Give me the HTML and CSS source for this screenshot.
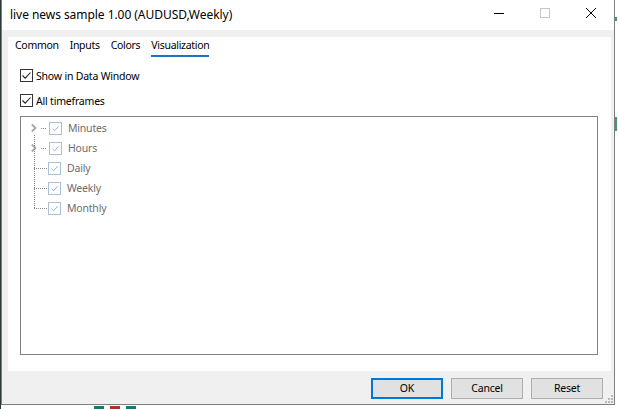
FILE: index.html
```html
<!DOCTYPE html>
<html>
<head>
<meta charset="utf-8">
<link rel="stylesheet" href="styles.css">
</head>
<body>
<div class="desk">
  <div class="win">
    <div class="titlebar">
      <span class="title">live news sample 1.00 (AUDUSD,Weekly)</span>
      <div class="ctrls">
        <span class="ctl">
          <svg width="12" height="12" viewBox="0 0 12 12"><path d="M1 6.5H11" stroke="#000" stroke-width="1"/></svg>
        </span>
        <span class="ctl">
          <svg width="12" height="12" viewBox="0 0 12 12"><rect x="1.5" y="1.5" width="9" height="9" fill="none" stroke="#c6c6c6" stroke-width="1"/></svg>
        </span>
        <span class="ctl">
          <svg width="12" height="12" viewBox="0 0 12 12"><path d="M1 1L11 11M11 1L1 11" stroke="#000" stroke-width="1"/></svg>
        </span>
      </div>
    </div>
    <div class="body">
      <div class="panel">
        <div class="tabs">
          <span class="tab">Common</span>
          <span class="tab">Inputs</span>
          <span class="tab">Colors</span>
          <span class="tab active">Visualization</span>
        </div>
        <div class="page">
          <label class="chk"><span class="box"><svg width="13" height="13" viewBox="0 0 13 13"><path d="M2.5 6.5L5.2 9.2L10.5 3.5" fill="none" stroke="#222" stroke-width="1.1"/></svg></span>Show in Data Window</label>
          <label class="chk"><span class="box"><svg width="13" height="13" viewBox="0 0 13 13"><path d="M2.5 6.5L5.2 9.2L10.5 3.5" fill="none" stroke="#222" stroke-width="1.1"/></svg></span>All timeframes</label>
          <div class="tree">
            <div class="vline"></div>
            <div class="node">
              <span class="exp"><svg width="8" height="10" viewBox="0 0 8 10"><path d="M1.8 1.5L5.5 5L1.8 8.5" fill="none" stroke="#a8a8a8" stroke-width="1.8"/></svg></span>
              <span class="dots short"></span>
              <span class="tbox"><svg width="13" height="13" viewBox="0 0 13 13"><path d="M3.5 6.8L5.6 8.8L9.5 4.3" fill="none" stroke="#8fb4d6" stroke-width="1"/></svg></span>
              <span class="lbl">Minutes</span>
            </div>
            <div class="node">
              <span class="exp"><svg width="8" height="10" viewBox="0 0 8 10"><path d="M1.8 1.5L5.5 5L1.8 8.5" fill="none" stroke="#a8a8a8" stroke-width="1.8"/></svg></span>
              <span class="dots short"></span>
              <span class="tbox"><svg width="13" height="13" viewBox="0 0 13 13"><path d="M3.5 6.8L5.6 8.8L9.5 4.3" fill="none" stroke="#8fb4d6" stroke-width="1"/></svg></span>
              <span class="lbl">Hours</span>
            </div>
            <div class="node">
              <span class="exp"></span>
              <span class="dots long"></span>
              <span class="tbox"><svg width="13" height="13" viewBox="0 0 13 13"><path d="M3.5 6.8L5.6 8.8L9.5 4.3" fill="none" stroke="#8fb4d6" stroke-width="1"/></svg></span>
              <span class="lbl">Daily</span>
            </div>
            <div class="node">
              <span class="exp"></span>
              <span class="dots long"></span>
              <span class="tbox"><svg width="13" height="13" viewBox="0 0 13 13"><path d="M3.5 6.8L5.6 8.8L9.5 4.3" fill="none" stroke="#8fb4d6" stroke-width="1"/></svg></span>
              <span class="lbl">Weekly</span>
            </div>
            <div class="node">
              <span class="exp"></span>
              <span class="dots long"></span>
              <span class="tbox"><svg width="13" height="13" viewBox="0 0 13 13"><path d="M3.5 6.8L5.6 8.8L9.5 4.3" fill="none" stroke="#8fb4d6" stroke-width="1"/></svg></span>
              <span class="lbl">Monthly</span>
            </div>
          </div>
        </div>
      </div>
      <div class="buttons">
        <button class="btn default">OK</button>
        <button class="btn">Cancel</button>
        <button class="btn">Reset</button>
      </div>
      <span class="grip"><svg width="10" height="10" viewBox="0 0 10 10" fill="#b8b8b8"><rect x="7" y="1" width="2" height="2"/><rect x="4" y="4" width="2" height="2"/><rect x="7" y="4" width="2" height="2"/><rect x="1" y="7" width="2" height="2"/><rect x="4" y="7" width="2" height="2"/><rect x="7" y="7" width="2" height="2"/></svg></span>
    </div>
  </div>
  <span class="candle c1"></span>
  <span class="candle c2"></span>
  <span class="candle c3"></span>
  <span class="cline l1"></span>
  <span class="cline l2"></span>
</div>
</body>
</html>
```

FILE: styles.css
```css
html, body {
  margin: 0;
  padding: 0;
  width: 618px;
  height: 409px;
  overflow: hidden;
  background: #ffffff;
  font-family: "Noto Sans", "Open Sans", sans-serif;
  font-size: 10.5px;
  color: #000;
}

.desk {
  position: relative;
  width: 618px;
  height: 409px;
  background: linear-gradient(to right, #2a3a34 0, #2a3a34 1px, #ffffff 1px);
}

.win {
  margin-left: 1px;
  width: 612px;
  height: 404px;
  border: 1px solid #7f7f7f;
  border-top: none;
  background: #f0f0f0;
  display: flex;
  flex-direction: column;
}

.titlebar {
  height: 30px;
  flex: none;
  background: #ffffff;
  display: flex;
  align-items: center;
  justify-content: space-between;
  padding-left: 8px;
}

.title {
  font-size: 12px;
  letter-spacing: -0.05px;
  margin-top: -2px;
}

.ctrls {
  display: flex;
  height: 30px;
}

.ctl {
  width: 46px;
  height: 30px;
  display: flex;
  align-items: center;
  justify-content: center;
  margin-top: -2px;
}

.body {
  flex: 1;
  position: relative;
  display: flex;
  flex-direction: column;
  padding: 7px 3px 0 6px;
}

.panel {
  background: #ffffff;
  height: 334px;
  display: flex;
  flex-direction: column;
}

.tabs {
  display: flex;
  gap: 11px;
  padding-left: 7px;
  height: 21px;
  align-items: flex-start;
  letter-spacing: -0.3px;
}

.tab {
  line-height: 17px;
  height: 17px;
  padding-bottom: 1px;
  border-bottom: 2px solid transparent;
}

.tab.active {
  border-bottom-color: #1a73c2;
}

.page {
  padding: 11px 0 0 12px;
  display: flex;
  flex-direction: column;
  letter-spacing: -0.2px;
}

.chk {
  display: flex;
  align-items: center;
  height: 13px;
  margin-bottom: 12px;
}

.box {
  width: 13px;
  height: 13px;
  box-sizing: border-box;
  border: 1px solid #333;
  background: #fff;
  margin-right: 3px;
  position: relative;
}

.box svg {
  position: absolute;
  left: -1px;
  top: -1px;
}

.tree {
  position: relative;
  margin-top: -3px;
  width: 578px;
  height: 239px;
  box-sizing: border-box;
  border: 1px solid #828282;
  padding-top: 1px;
}

.vline {
  position: absolute;
  left: 13px;
  top: 18px;
  height: 73px;
  border-left: 1px dotted #8a8a8a;
}

.node {
  height: 20px;
  display: flex;
  align-items: center;
  color: #6d6d6d;
}

.exp {
  width: 8px;
  height: 10px;
  margin-left: 9px;
  display: flex;
}

.dots {
  height: 0;
  border-top: 1px dotted #8a8a8a;
  margin-top: 1px;
}

.dots.short {
  width: 5px;
  margin-left: 3px;
  margin-right: 3px;
}

.dots.long {
  width: 13px;
  margin-left: -4px;
  margin-right: 1px;
}

.tbox {
  width: 13px;
  height: 13px;
  box-sizing: border-box;
  border: 1px solid #a9c1d8;
  background: #fff;
  position: relative;
  margin-right: 6px;
}

.tbox svg {
  position: absolute;
  left: -1px;
  top: -1px;
}

.buttons {
  display: flex;
  justify-content: flex-end;
  gap: 8px;
  padding: 7px 8px 0 0;
}

.btn {
  width: 72px;
  height: 21px;
  box-sizing: border-box;
  border: 1px solid #adadad;
  background: #e1e1e1;
  font-family: "Noto Sans", "Open Sans", sans-serif;
  font-size: 10.5px;
  letter-spacing: -0.2px;
  color: #000;
  padding: 0;
  line-height: 17px;
}

.btn.default {
  border: 2px solid #0078d7;
  line-height: 15px;
}

.grip {
  position: absolute;
  right: 0;
  bottom: 0;
  width: 10px;
  height: 10px;
  display: flex;
}

.candle {
  position: absolute;
  bottom: 0;
  height: 3px;
  width: 10px;
}

.c1 { left: 94px; background: #1a7a6a; }
.c2 { left: 110px; background: #a83232; }
.c3 { left: 126px; background: #1a7a6a; }

.cline {
  position: absolute;
  left: 615px;
  width: 2px;
  background: #3a9a7a;
}

.l1 { top: 17px; height: 4px; }
.l2 { top: 117px; height: 14px; }
```
